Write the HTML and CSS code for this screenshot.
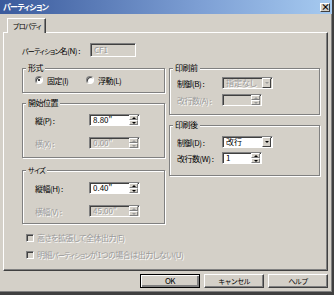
FILE: index.html
```html
<!DOCTYPE html>
<html lang="ja">

<head>
    <meta charset="UTF-8">
    <meta name="viewport" content="width=device-width, initial-scale=1.0">
    <title>パーティション</title>
    <link rel="stylesheet" href="styles.css">
</head>

<body>
    <div class="window">
        <div class="titlebar">
            <span class="title kana">パーティション</span>
            <span class="close">×</span>
        </div>
        <div class="content">
            <div class="tabs">
                <div class="tab"><span class="kana">プロパティ</span></div>
            </div>
            <div class="panel">
                <div class="name_row">
                    <span class="name_label"><span class="kana">パーティション</span>名(N) :</span>
                    <span class="field off name_field">CF1</span>
                </div>

                <div class="cols">
                    <div class="col col_left">
                        <!-- 形式 -->
                        <div class="grp grp_format">
                            <div class="grp_title">形式</div>
                            <div class="radios">
                                <span class="radio on"></span><span class="radio_text">固定(I)</span>
                                <span class="radio"></span><span class="radio_text">浮動(L)</span>
                            </div>
                        </div>
                        <!-- 開始位置 -->
                        <div class="grp grp_start">
                            <div class="grp_title">開始位置</div>
                            <div class="row row_first">
                                <span class="lbl">縦(P) :</span>
                                <div class="field spin"><span class="val">8.80"</span><span class="arrows"><i class="up"></i><i class="dn"></i></span></div>
                            </div>
                            <div class="row row_next off_row">
                                <span class="lbl">横(X) :</span>
                                <div class="field spin off"><span class="val">0.00"</span><span class="arrows"><i class="up"></i><i class="dn"></i></span></div>
                            </div>
                        </div>
                        <!-- サイズ -->
                        <div class="grp grp_size">
                            <div class="grp_title"><span class="kana">サイズ</span></div>
                            <div class="row row_first">
                                <span class="lbl">縦幅(H) :</span>
                                <div class="field spin"><span class="val">0.40"</span><span class="arrows"><i class="up"></i><i class="dn"></i></span></div>
                            </div>
                            <div class="row row_next off_row">
                                <span class="lbl">横幅(V) :</span>
                                <div class="field spin off"><span class="val">45.00"</span><span class="arrows"><i class="up"></i><i class="dn"></i></span></div>
                            </div>
                        </div>
                    </div>

                    <div class="col col_right">
                        <!-- 印刷前 -->
                        <div class="grp grp_before">
                            <div class="grp_title">印刷前</div>
                            <div class="row row_combo">
                                <span class="lbl">制御(B) :</span>
                                <div class="field combo off"><span class="val">指定なし</span><span class="drop"></span></div>
                            </div>
                            <div class="row row_count off_row">
                                <span class="lbl">改行数(A) :</span>
                                <div class="field spin small off"><span class="val"></span><span class="arrows"><i class="up"></i><i class="dn"></i></span></div>
                            </div>
                        </div>
                        <!-- 印刷後 -->
                        <div class="grp grp_after">
                            <div class="grp_title">印刷後</div>
                            <div class="row row_combo">
                                <span class="lbl">制御(D) :</span>
                                <div class="field combo"><span class="val">改行</span><span class="drop"></span></div>
                            </div>
                            <div class="row row_count">
                                <span class="lbl">改行数(W) :</span>
                                <div class="field spin small"><span class="val">1</span><span class="arrows"><i class="up"></i><i class="dn"></i></span></div>
                            </div>
                        </div>
                    </div>
                </div>

                <div class="check check_first off_row">
                    <span class="box"></span><span>高さを拡張して全体出力(E)</span>
                </div>
                <div class="check check_next off_row">
                    <span class="box"></span><span>明細<span class="kana">パーティション</span>が1つの場合は出力しない(U)</span>
                </div>
            </div>

            <div class="buttons">
                <button class="btn default">OK</button>
                <button class="btn"><span class="kana">キャンセル</span></button>
                <button class="btn"><span class="kana">ヘルプ</span></button>
            </div>
        </div>
    </div>
</body>

</html>
```

FILE: styles.css
```css
* {
    box-sizing: border-box;
}

body {
    margin: 0;
    font-family: "Noto Sans CJK JP", "Noto Sans", sans-serif;
    font-size: 8px;
    letter-spacing: -0.5px;
    font-feature-settings: "palt";
    color: #000;
}

/* カタカナは細め */
.kana {
    font-size: 7px;
    letter-spacing: -0.7px;
}

.window {
    width: 334px;
    height: 295px;
    background: #d4d0c8;
    border-right: 2px solid #404040;
    border-bottom: 3px solid #404040;
    box-shadow: inset -1px -1px 0 #808080;
}

/* タイトルバー */
.titlebar {
    height: 14px;
    display: flex;
    align-items: center;
    justify-content: space-between;
    padding: 0 2px 0 3px;
    background: linear-gradient(to right, #3a5a9c, #7d9fd4 60%, #a6caf0);
}

.title {
    color: #fff;
    font-weight: bold;
    font-size: 8px;
    line-height: 14px;
}

.close {
    width: 10px;
    height: 9px;
    background: #d4d0c8;
    border: 1px solid;
    border-color: #fff #404040 #404040 #fff;
    font-size: 9px;
    letter-spacing: 0;
    line-height: 6px;
    text-align: center;
    font-weight: bold;
}

.content {
    padding: 0 4px 0 3px;
}

/* タブ */
.tabs {
    display: flex;
    margin-top: 4px;
    padding-left: 4px;
    height: 14px;
}

.tab {
    position: relative;
    z-index: 1;
    height: 15px;
    padding: 0 4px 0 5px;
    white-space: nowrap;
    line-height: 13px;
    background: #d4d0c8;
    border: 1px solid;
    border-bottom: none;
    border-color: #fff #404040 #fff #fff;
    box-shadow: inset -1px 0 0 #808080;
}

.panel {
    height: 239px;
    padding-left: 18px;
    border: 1px solid;
    border-color: #fff #404040 #404040 #fff;
    box-shadow: inset -1px -1px 0 #808080;
}

.name_row {
    display: flex;
    align-items: center;
    margin-top: 10px;
    height: 14px;
}

.name_label {
    width: 68px;
    white-space: nowrap;
}

.field {
    display: flex;
    align-items: center;
    background: #fff;
    border: 1px solid;
    border-color: #808080 #fff #fff #808080;
    box-shadow: inset 1px 1px 0 #404040;
    padding-left: 3px;
    line-height: 10px;
    letter-spacing: 0;
}

.field.off {
    background: #d4d0c8;
    color: #9a9a9a;
    text-shadow: 1px 1px 0 #fff;
}

.name_field {
    width: 46px;
    height: 14px;
}

.cols {
    display: flex;
    gap: 4px;
    margin-top: 11px;
    align-items: flex-start;
}

.col_left {
    width: 143px;
}

.col_right {
    width: 151px;
}

/* グループ枠 */
.grp {
    border: 1px solid #808080;
    box-shadow: inset 1px 1px 0 #fff, 1px 1px 0 #fff;
}

.grp_title {
    width: fit-content;
    height: 10px;
    line-height: 10px;
    margin: -6px 0 -4px 3px;
    padding: 0 2px;
    background: #d4d0c8;
}

.grp_format {
    height: 25px;
}

.grp_start {
    height: 55px;
    margin-top: 10px;
}

.grp_size {
    height: 54px;
    margin-top: 12px;
}

.grp_before {
    height: 47px;
}

.grp_after {
    height: 51px;
    margin-top: 10px;
}

.radios {
    display: flex;
    align-items: center;
    height: 10px;
    margin-top: 6px;
    padding-left: 12px;
}

.radio {
    width: 8px;
    height: 8px;
    border-radius: 50%;
    background: #fff;
    border: 1px solid;
    border-color: #808080 #fff #fff #808080;
    box-shadow: inset 1px 1px 0 #404040;
    display: flex;
    align-items: center;
    justify-content: center;
}

.radio.on::after {
    content: "";
    width: 2px;
    height: 2px;
    border-radius: 50%;
    background: #000;
}

.radio_text {
    margin-left: 4px;
    width: 39px;
}

.row {
    display: flex;
    align-items: center;
    height: 12px;
}

.row_first {
    margin-top: 10px;
}

.row_next {
    margin-top: 11px;
}

.grp_size .row_first {
    margin-top: 11px;
}

.lbl {
    width: 66px;
    padding-left: 12px;
    white-space: nowrap;
}

.col_right .lbl {
    width: 52px;
    padding-left: 7px;
}

.off_row,
.off_row .lbl {
    color: #9a9a9a;
    text-shadow: 1px 1px 0 #fff;
}

.grp_before .row_combo {
    margin-top: 8px;
}

.grp_before .row_count {
    margin-top: 5px;
}

.grp_after .row_combo {
    margin-top: 10px;
}

.grp_after .row_count {
    margin-top: 4px;
}

/* スピン */
.spin {
    width: 51px;
    height: 12px;
    padding-right: 1px;
}

.spin.small {
    width: 40px;
}

.val {
    flex: 1;
    white-space: nowrap;
    overflow: hidden;
}

.arrows {
    display: flex;
    flex-direction: column;
    width: 9px;
    height: 10px;
}

.arrows i {
    flex: 1;
    display: flex;
    align-items: center;
    justify-content: center;
    background: #d4d0c8;
    border: 1px solid;
    border-color: #fff #808080 #808080 #fff;
}

.arrows i::after {
    content: "";
    border-left: 2px solid transparent;
    border-right: 2px solid transparent;
}

.arrows .up::after {
    border-bottom: 2px solid #000;
}

.arrows .dn::after {
    border-top: 2px solid #000;
}

.off .arrows .up::after {
    border-bottom-color: #9a9a9a;
}

.off .arrows .dn::after {
    border-top-color: #9a9a9a;
}

/* コンボ */
.combo {
    width: 51px;
    height: 12px;
    padding-right: 1px;
}

.drop {
    width: 9px;
    height: 10px;
    display: flex;
    align-items: center;
    justify-content: center;
    background: #d4d0c8;
    border: 1px solid;
    border-color: #fff #404040 #404040 #fff;
}

.drop::after {
    content: "";
    border-left: 2px solid transparent;
    border-right: 2px solid transparent;
    border-top: 2px solid #000;
}

.combo.off .drop::after {
    border-top-color: #9a9a9a;
}

/* チェック */
.check {
    display: flex;
    align-items: center;
    height: 9px;
    padding-left: 4px;
    white-space: nowrap;
}

.check_first {
    margin-top: 9px;
}

.check_next {
    margin-top: 8px;
}

.box {
    width: 8px;
    height: 8px;
    margin-right: 3px;
    background: #d4d0c8;
    border: 1px solid;
    border-color: #808080 #fff #fff #808080;
    box-shadow: inset 1px 1px 0 #404040;
}

/* ボタン */
.buttons {
    display: flex;
    justify-content: flex-end;
    gap: 4px;
    margin-top: 3px;
}

.btn {
    width: 60px;
    height: 14px;
    padding: 0;
    font-family: inherit;
    font-size: 8px;
    letter-spacing: -0.5px;
    line-height: 10px;
    background: #d4d0c8;
    border: 1px solid;
    border-color: #fff #404040 #404040 #fff;
    box-shadow: inset -1px -1px 0 #808080;
}

.btn.default {
    border-color: #000;
    box-shadow: inset 1px 1px 0 #fff, inset -2px -2px 0 #808080;
}
```
